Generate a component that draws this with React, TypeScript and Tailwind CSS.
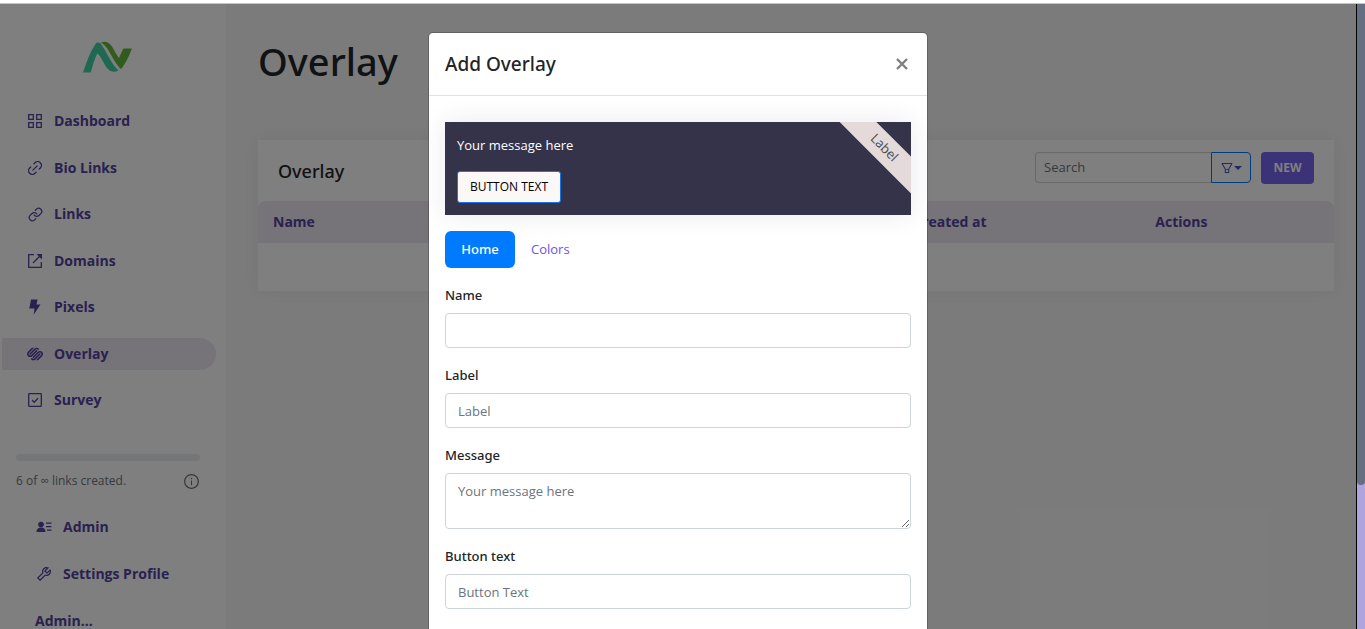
import type { ReactNode } from "react";
import { Link, Link2 } from "lucide-react";
import { AiOutlineFilter, AiOutlineInfoCircle, AiOutlineTool } from "react-icons/ai";
import { FaSquarespace } from "react-icons/fa";

type IconProps = { children: ReactNode };

function LineIcon({ children }: IconProps) {
  return (
    <svg
      viewBox="0 0 16 16"
      className="size-4"
      fill="none"
      stroke="currentColor"
      strokeWidth="1.3"
      aria-hidden="true"
    >
      {children}
    </svg>
  );
}

function Logo() {
  return (
    <svg viewBox="0 0 50 34" className="h-[34px] w-[50px]" aria-label="Logo">
      <path
        d="M0 32.5C3.5 22 7 12 12.5 4C14 1.8 16.5 2.2 18 4C24 12 28 24 35.5 30.5C31 33 26.5 31.5 24 28C20.5 23.5 18.5 17 14.5 13.5C11.5 18 10 25.5 7.8 32.5Z"
        fill="#3ed3a4"
      />
      <path
        d="M18 2.5C22 .8 26 2 29 6.5C31.5 10.5 33.5 15 36 18C37.5 15 39 11 40.5 8.5H49C46 16 42.5 24 38 29C33 24.5 29 16.5 25.5 10.5C23.5 7 21 4.5 18 2.5Z"
        fill="#62b83c"
      />
    </svg>
  );
}

const links = [
  {
    label: "Dashboard",
    icon: (
      <LineIcon>
        <path d="M1.7 1.7h4.6v4.6H1.7zM9.7 1.7h4.6v4.6H9.7zM1.7 9.7h4.6v4.6H1.7zM9.7 9.7h4.6v4.6H9.7z" />
      </LineIcon>
    ),
  },
  { label: "Bio Links", icon: <Link2 className="size-[18px] -rotate-45" strokeWidth={1.8} /> },
  { label: "Links", icon: <Link className="size-[15px]" strokeWidth={2} /> },
  {
    label: "Domains",
    icon: (
      <LineIcon>
        <path d="M7 1.7H1.7v12.6h12.6V9M6 10l7.7-7.7" />
        <path d="M9.5 1h5.5v5.5z" fill="currentColor" stroke="none" />
      </LineIcon>
    ),
  },
  {
    label: "Pixels",
    icon: (
      <svg viewBox="0 0 16 16" className="size-4" fill="currentColor" aria-hidden="true">
        <path d="M4 .5h6.5L9.5 5.5h4L6.7 15.7 7.5 9.5H2.3z" />
      </svg>
    ),
  },
  { label: "Overlay", icon: <FaSquarespace className="size-4" />, active: true },
  {
    label: "Survey",
    icon: (
      <LineIcon>
        <rect x="1.7" y="1.7" width="12.6" height="12.6" rx=".5" />
        <path d="m5 8 2.2 2.2L11 6.3" />
      </LineIcon>
    ),
  },
];

function Sidebar() {
  return (
    <aside className="flex w-[226px] shrink-0 flex-col bg-white pt-9 text-[#53429f] shadow-[0_0_12px_rgba(0,0,0,0.12)]">
      <a href="#" className="mx-auto pr-[10px]">
        <Logo />
      </a>
      <nav className="mt-[31px] flex h-[311px] shrink-0 flex-col justify-between pl-[2px] pr-[10px]">
        {links.map((link) => (
          <a
            key={link.label}
            href="#"
            className={
              link.active
                ? "flex h-8 items-center gap-[10px] rounded-r-full bg-[#ece6f2] pl-6 text-sm font-bold"
                : "flex h-8 items-center gap-[10px] pl-6 text-sm font-bold"
            }
          >
            <span className="flex w-[18px] justify-center">{link.icon}</span>
            {link.label}
          </a>
        ))}
      </nav>
      <div className="mt-[38px] px-4 pr-[26px]">
        <div className="h-[7px] rounded bg-[#e9ecef]" />
        <div className="mt-2 flex items-center justify-between text-xs leading-6 text-[#6c757d]">
          <span>6 of ∞ links created.</span>
          <AiOutlineInfoCircle className="size-[17px]" />
        </div>
      </div>
      <nav className="mt-[18px] flex shrink-0 flex-col gap-[15px] pl-[35px] text-sm font-bold">
        <a href="#" className="flex h-8 items-center gap-[10px]">
          <span className="flex w-[18px] justify-center">
            <svg viewBox="0 0 16 16" className="size-4" fill="currentColor" aria-hidden="true">
              <circle cx="5" cy="5.5" r="2.8" />
              <path d="M.5 13c0-3 1.5-4.5 4.5-4.5S9.5 10 9.5 13zM10 3.5h5.5v1.3H10zM10 7h5.5v1.3H10zM11 10.5h4.5v1.3H11z" />
            </svg>
          </span>
          Admin
        </a>
        <a href="#" className="flex h-8 items-center gap-[10px]">
          <AiOutlineTool className="size-[18px]" />
          Settings Profile
        </a>
        <a href="#" className="flex h-8 items-center">
          Admin...
        </a>
      </nav>
    </aside>
  );
}

function OverlayPage() {
  return (
    <main className="min-w-0 flex-1 bg-[#f7f7f7] pl-8 pr-[22px] pt-7">
      <h1 className="font-['Noto_Sans'] text-[38px] font-medium leading-[58px] text-[#212529]">
        Overlay
      </h1>
      <section className="mt-[50px] bg-white shadow-[0_0_20px_rgba(0,0,0,0.06)]">
        <div className="flex h-[61px] items-start justify-between px-5 pt-3">
          <h2 className="font-['Noto_Sans'] text-lg font-medium leading-[38px] text-[#212529]">
            Overlay
          </h2>
          <div className="flex items-start gap-[10px]">
            <div className="flex h-[31px]">
              <input
                aria-label="Search"
                placeholder="Search"
                className="w-44 rounded-l border border-r-0 border-[#ced4da] px-2 text-[13px] placeholder:text-[#6c757d]"
              />
              <button
                type="button"
                aria-label="Filters"
                className="flex w-10 items-center justify-center rounded-r border border-[#007bff] text-[#4253c4]"
              >
                <AiOutlineFilter className="size-[14px]" />
                <svg viewBox="0 0 8 4" className="h-1 w-2" fill="currentColor" aria-hidden="true">
                  <path d="M0 0h8L4 4z" />
                </svg>
              </button>
            </div>
            <button
              type="button"
              className="h-8 w-[53px] rounded bg-[#7665ee] text-xs font-bold text-white"
            >
              NEW
            </button>
          </div>
        </div>
        <table className="w-full table-fixed text-left text-sm text-[#53429f]">
          <thead className="bg-[#ece6f2]">
            <tr className="h-[42px]">
              <th className="w-[59.5%] rounded-tl-lg pl-[15px]">Name</th>
              <th className="w-[22.5%] pl-[15px]">Created at</th>
              <th className="rounded-tr-lg pl-[15px]">Actions</th>
            </tr>
          </thead>
          <tbody>
            <tr className="h-12">
              <td colSpan={3} />
            </tr>
          </tbody>
        </table>
      </section>
    </main>
  );
}

const fieldClass =
  "block w-full rounded border border-[#ced4da] bg-white px-3 text-[13px] text-[#495057] placeholder:text-[#6c757d]";

type FieldProps = { id: string; label: string; placeholder?: string; multiline?: boolean };

function Field({ id, label, placeholder, multiline }: FieldProps) {
  return (
    <div className="mb-4">
      <label
        htmlFor={id}
        className="mb-1.5 block font-['Noto_Sans'] text-[13px] font-medium leading-[23px]"
      >
        {label}
      </label>
      {multiline ? (
        <textarea
          id={id}
          placeholder={placeholder}
          className={`${fieldClass} h-14 resize-y py-[7px] leading-[21px]`}
        />
      ) : (
        <input id={id} placeholder={placeholder} className={`${fieldClass} h-[35px]`} />
      )}
    </div>
  );
}

function AddOverlayDialog() {
  return (
    <div
      role="dialog"
      aria-labelledby="dialog-title"
      className="mt-7 w-[500px] shrink-0 rounded-[5px] border border-black/20 bg-white bg-clip-padding pb-20 text-[#212529]"
    >
      <div className="flex h-[63px] items-center justify-between border-b border-[#dee2e6] px-4">
        <h2 id="dialog-title" className="font-['Noto_Sans'] text-[19px] font-medium">
          Add Overlay
        </h2>
        <button type="button" aria-label="Close" className="flex size-[18px] items-center justify-center text-[#7f7f7f]">
          <svg viewBox="0 0 12 12" className="size-3" stroke="currentColor" strokeWidth="2.4" aria-hidden="true">
            <path d="m1 1 10 10M11 1 1 11" />
          </svg>
        </button>
      </div>
      <div className="px-4 pt-[26px]">
        <div className="relative h-[93px] overflow-hidden bg-[#343349] px-3 pt-3 shadow-[0_0_24px_rgba(50,50,93,0.1)]">
          <p className="text-[13px] leading-[22px] text-white">Your message here</p>
          <button
            type="button"
            className="mt-[15px] h-8 rounded-[3px] border border-[#1a73e8] bg-[#fcf8f8] px-3 text-xs text-black"
          >
            BUTTON TEXT
          </button>
          <span className="absolute -right-[33px] top-[13px] flex h-[26px] w-[120px] rotate-45 items-center justify-center bg-[#e4dada] text-[13px] text-[#4c4a4a]">
            Label
          </span>
        </div>
        <div className="my-4 flex h-[37px] text-[13px]">
          <button
            type="button"
            className="w-[70px] rounded-md bg-[#007bff] font-['Noto_Sans'] font-medium text-white"
          >
            Home
          </button>
          <button type="button" className="px-4 text-[#6e50f0]">
            Colors
          </button>
        </div>
        <form>
          <Field id="name" label="Name" />
          <Field id="label" label="Label" placeholder="Label" />
          <Field id="message" label="Message" placeholder="Your message here" multiline />
          <Field id="button-text" label="Button text" placeholder="Button Text" />
        </form>
      </div>
    </div>
  );
}

export default function App() {
  return (
    <div className="flex h-screen flex-col overflow-hidden bg-white font-['Segoe_UI','Open_Sans',sans-serif]">
      <div className="h-1 shrink-0 border-b border-[#c4c4c4]" />
      <div className="flex min-h-0 flex-1">
        <div className="relative flex min-w-0 flex-1 overflow-hidden">
          <Sidebar />
          <OverlayPage />
          <div className="absolute inset-0 flex items-start justify-center overflow-hidden bg-black/50">
            <AddOverlayDialog />
          </div>
        </div>
        <div className="w-[9px] shrink-0 border-l border-black bg-[#b0a4de]">
          <div className="h-[77%] rounded-b-full border-l border-[#7068a8] bg-[#666f82]" />
        </div>
      </div>
    </div>
  );
}
